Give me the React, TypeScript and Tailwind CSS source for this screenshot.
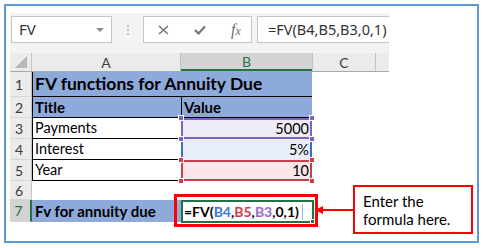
import React from 'react';

const cellFont = "font-['Lato',sans-serif]";
const uiFont = "font-['Noto_Sans',sans-serif]";

function RowHead({ n, h, active }: { n: number; h: string; active?: boolean }) {
  return (
    <div
      className={`w-[22px] shrink-0 flex items-center justify-center pr-[3px] text-[14px] border-b border-[#d6d6d6] ${h} ${
        active ? 'bg-[#d3d3d3] text-[#217346] border-r-2 border-r-[#217346]' : 'bg-[#ebebeb] text-[#3c3c3c] border-r border-r-[#c4c4c4]'
      }`}
    >
      {n}
    </div>
  );
}

function Handle({ color, pos }: { color: string; pos: string }) {
  return <div className={`absolute w-[6px] h-[6px] border border-white ${color} ${pos}`} />;
}

export default function App() {
  return (
    <div className={`relative w-[483px] h-[248px] bg-white overflow-hidden ${cellFont}`}>
      <div className="ml-[4px] mt-[4px] w-[475px] h-[239px] border-2 border-[#5b9bd5] pl-[4px] pt-[7px]">
        <div className="w-[379px]">
          {/* formula bar */}
          <div className={`h-[40px] bg-[#f3f3f3] flex items-start pt-[3px] ${uiFont}`}>
            <div className="ml-[1px] w-[101px] h-[27px] bg-white border border-[#c6c6c6] flex items-center justify-between pl-[7px] pr-[7px]">
              <span className="text-[15px] text-[#333]">FV</span>
              <span className="w-0 h-0 border-x-[4px] border-x-transparent border-t-[4px] border-t-[#8a8a8a]" />
            </div>
            <div className="w-[31px] h-[27px] flex flex-col items-center justify-center gap-[2px]">
              <span className="w-[2px] h-[2px] bg-[#c2c2c2]" />
              <span className="w-[2px] h-[2px] bg-[#c2c2c2]" />
              <span className="w-[2px] h-[2px] bg-[#c2c2c2]" />
            </div>
            <div className="w-[109px] h-[27px] bg-white border border-[#c6c6c6] flex items-center pl-[14px] gap-[25px]">
              <svg width="11" height="10" viewBox="0 0 11 10">
                <path d="M1 1 L10 9 M10 1 L1 9" stroke="#6e6e6e" strokeWidth="1.3" fill="none" />
              </svg>
              <svg width="12" height="10" viewBox="0 0 12 10">
                <path d="M1 5 L4.5 8.5 L11 1.5" stroke="#747474" strokeWidth="2.2" fill="none" />
              </svg>
              <span className="font-['Liberation_Serif',serif] italic text-[16px] text-[#6e6e6e] leading-none">
                f<span className="text-[12px]">x</span>
              </span>
            </div>
            <div className="ml-[5px] flex-1 h-[27px] bg-white border-y border-l border-[#c6c6c6] flex items-center pl-[10px] text-[14.5px] text-[#333] whitespace-nowrap">
              =FV(B4,B5,B3,0,1)
            </div>
          </div>

          {/* column headers */}
          <div className="h-[19px] flex bg-[#ebebeb] border-b border-[#a8a8a8] text-[14px] text-[#3c3c3c]">
            <div className="w-[22px] border-r border-[#c4c4c4] flex items-end justify-end pr-[4px] pb-[3px]">
              <span className="w-0 h-0 border-l-[12px] border-l-transparent border-b-[12px] border-b-[#b8b8b8]" />
            </div>
            <div className="w-[149px] border-r border-[#c4c4c4] flex items-center justify-center">A</div>
            <div className="w-[131px] bg-[#d3d3d3] border-b-2 border-[#217346] flex items-center justify-center text-[#217346]">B</div>
            <div className="w-[64px] border-x border-[#c4c4c4] flex items-center justify-center">C</div>
            <div className="flex-1" />
          </div>

          {/* row 1 */}
          <div className="flex h-[25px]">
            <RowHead n={1} h="h-[25px]" />
            <div className="w-[280px] bg-[#8eaadb] border-l border-b border-black pl-[2px] flex items-center text-[17.5px] font-bold text-black whitespace-nowrap">
              FV functions for Annuity Due
            </div>
          </div>

          {/* row 2 */}
          <div className="flex h-[21px]">
            <RowHead n={2} h="h-[21px]" />
            <div className="w-[149px] bg-[#8eaadb] border-l border-b border-black pl-[2px] flex items-center text-[15px] font-bold">Title</div>
            <div className="w-[131px] bg-[#8eaadb] border-l border-b border-black pl-[2px] flex items-center text-[15px] font-bold">Value</div>
          </div>

          {/* rows 3-5 */}
          <div className="flex">
            <div className="flex flex-col">
              {[
                [3, 'Payments'],
                [4, 'Interest'],
                [5, 'Year'],
              ].map(([n, label]) => (
                <div key={n} className="flex h-[21px]">
                  <RowHead n={n as number} h="h-[21px]" />
                  <div className="w-[149px] bg-white border-l border-b border-black pl-[2px] flex items-center text-[14.5px] text-black">
                    {label}
                  </div>
                </div>
              ))}
            </div>
            <div className="relative w-[131px] flex flex-col text-[14.5px] text-black">
              <div className="h-[21px] bg-[#efebf5] border-2 border-[#8064c0] flex items-center justify-end pr-[1px]">5000</div>
              <div className="h-[21px] bg-[#e8eef8] border-x-2 border-[#3e70c8] flex items-center justify-end pr-[1px]">5%</div>
              <div className="h-[21px] bg-[#f8e6e8] border-2 border-[#c8404b] flex items-center justify-end pr-[1px]">10</div>
              <Handle color="bg-[#8064c0]" pos="-left-[3px] -top-[3px]" />
              <Handle color="bg-[#8064c0]" pos="-right-[3px] -top-[3px]" />
              <Handle color="bg-[#8064c0]" pos="-left-[3px] top-[18px]" />
              <Handle color="bg-[#8064c0]" pos="-right-[3px] top-[18px]" />
              <Handle color="bg-[#c8404b]" pos="-left-[3px] top-[39px]" />
              <Handle color="bg-[#c8404b]" pos="-right-[3px] top-[39px]" />
              <Handle color="bg-[#c8404b]" pos="-left-[3px] top-[60px]" />
              <Handle color="bg-[#c8404b]" pos="-right-[3px] top-[60px]" />
            </div>
          </div>

          {/* row 6 */}
          <div className="flex h-[19px]">
            <RowHead n={6} h="h-[19px]" />
          </div>

          {/* row 7 */}
          <div className="flex h-[22px]">
            <RowHead n={7} h="h-[22px]" active />
            <div className="w-[149px] bg-[#8eaadb] pl-[3px] flex items-center text-[15px] font-bold whitespace-nowrap">
              Fv for annuity due
            </div>
            <div className="relative w-[133px] h-[23px] bg-white border-2 border-[#217346] pl-[1px] flex items-center text-[14px] font-bold whitespace-nowrap">
              <span>=FV(</span>
              <span className="text-[#3b78d1]">B4</span>
              <span>,</span>
              <span className="text-[#d03c48]">B5</span>
              <span>,</span>
              <span className="text-[#9a6bcc]">B3</span>
              <span>,0,1)</span>
              <span className="ml-[3px] w-px h-[16px] bg-[#9fb4c8]" />
              <span className="absolute -right-[3px] -bottom-[3px] w-[5px] h-[5px] bg-[#217346] border border-white" />
            </div>
          </div>
        </div>
      </div>

      {/* annotations */}
      <div className="absolute left-[174px] top-[194px] w-[144px] h-[33px] border-[3px] border-[#ff0000]" />
      <svg className="absolute left-[314px] top-[203px]" width="40" height="14" viewBox="0 0 40 14">
        <path d="M8 7 L40 7" stroke="#ff0000" strokeWidth="2" />
        <path d="M1 7 L9 3 L9 11 Z" fill="#ff0000" />
      </svg>
      <div className="absolute left-[353px] top-[185px] w-[120px] h-[49px] border-2 border-[#ff0000] bg-white pl-[8px] pt-[5px] text-[15px] leading-[18px] text-black">
        Enter the
        <br />
        formula here.
      </div>
    </div>
  );
}
